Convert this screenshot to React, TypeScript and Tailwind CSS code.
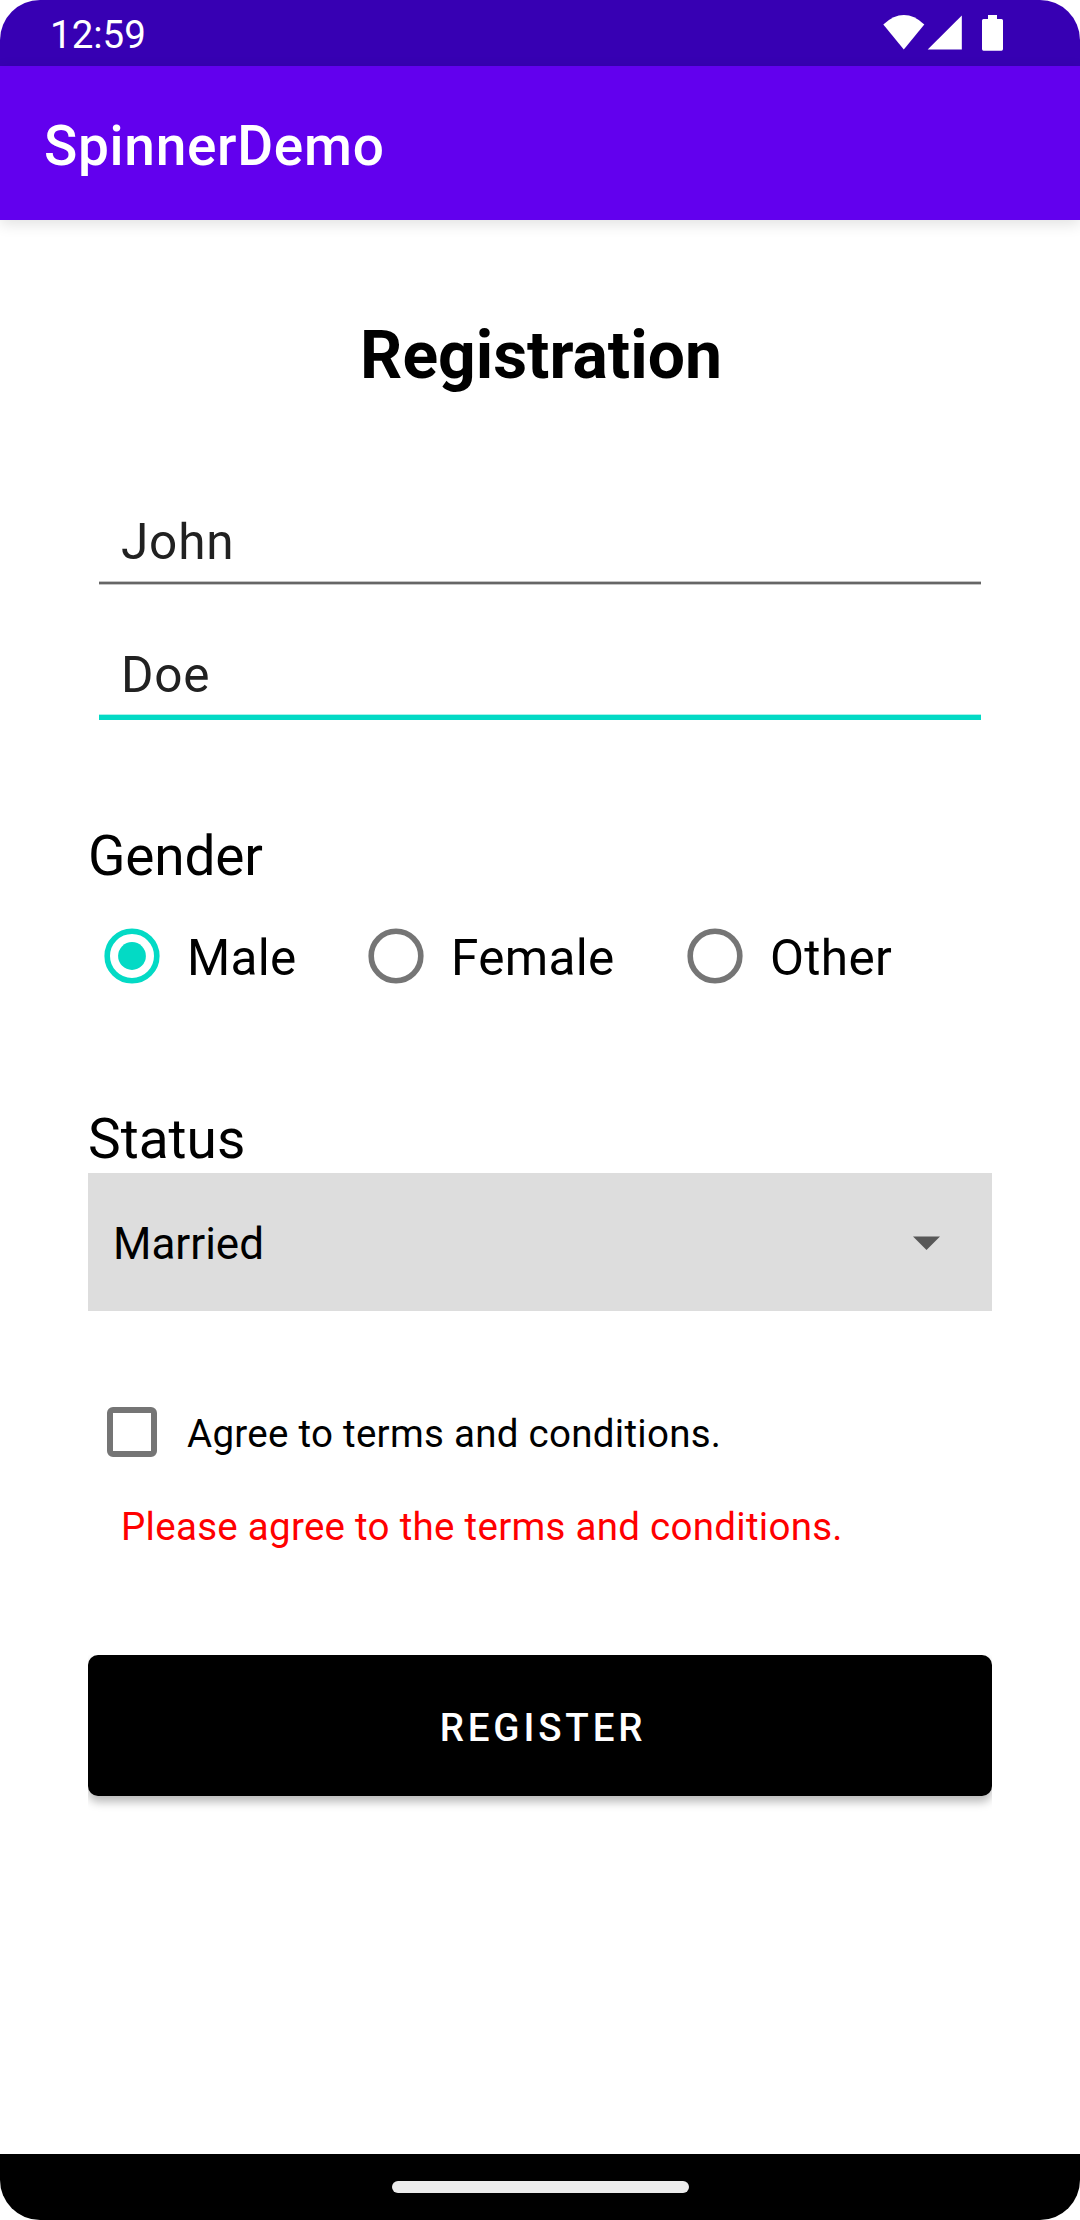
function StatusBar() {
  return (
    <div className="flex h-[66px] items-start justify-between bg-[#3700b3] pl-[50px] pr-[77px] text-white">
      <span className="mt-[12px] text-[38.5px] leading-[46px]">12:59</span>
      <div className="mt-[13px] flex items-start">
        <svg className="h-[40px] w-[44px]" viewBox="0 0 44 40" fill="currentColor">
          <path d="M1.300 11.400 Q22 -7.400 42.300 11.400 L21.800 36.400 Z" />
        </svg>
        <svg className="h-[40px] w-[36px]" viewBox="0 0 36 40" fill="currentColor">
          <path d="M1.700 36.500 L35.800 2.500 V36.500 Z" />
        </svg>
        <svg className="ml-[20px] h-[40px] w-[21px]" viewBox="0 0 21 40" fill="currentColor">
          <path d="M6 2 H15 V6 H19.500 Q21 6 21 7.500 V36 Q21 37.700 19.500 37.700 H1.500 Q0 37.700 0 36 V7.500 Q0 6 1.500 6 H6 Z" />
        </svg>
      </div>
    </div>
  );
}

function Radio({ label, checked = false }: { label: string; checked?: boolean }) {
  return (
    <label className="flex h-[58px] items-center">
      <svg
        className={checked ? "size-[56px] text-[#03dac5]" : "size-[56px] text-[#757575]"}
        viewBox="0 0 56 56"
      >
        <circle cx="28" cy="28" r="24.8" fill="none" stroke="currentColor" strokeWidth="5.600" />
        {checked && <circle cx="28" cy="28" r="13.9" fill="currentColor" />}
      </svg>
      <span className="ml-[27px] mt-[4px] text-[49.5px] leading-[58px] tracking-[0.3px]">{label}</span>
    </label>
  );
}

export default function App() {
  return (
    <div className="h-[2220px] w-[1080px] bg-white">
      <div className="flex h-full flex-col overflow-hidden rounded-[40px] bg-white font-['Roboto',sans-serif] text-black">
        <StatusBar />
        <header className="flex h-[154px] shrink-0 items-center bg-[#6200ee] px-[44px] shadow-[0_4px_14px_rgba(0,0,0,0.12)]">
          <h1 className="mt-[6px] text-[55px] font-medium leading-[64px] tracking-[0.7px] text-white">SpinnerDemo</h1>
        </header>

        <main className="flex flex-1 flex-col px-[88px]">
          <h2 className="mt-[97px] pl-[2px] text-center text-[66px] font-bold leading-[78px]">Registration</h2>

          <div className="mx-[11px] mt-[118px] flex h-[72px] flex-col justify-between text-[#212121]">
            <span className="pl-[22px] text-[49.5px] leading-[58px] tracking-[0.8px]">John</span>
            <span className="h-[4px] border-y border-[#c4c4c4] bg-[#666666]" />
          </div>
          <div className="mx-[11px] mt-[61px] flex h-[74px] flex-col justify-between text-[#212121]">
            <span className="pl-[22px] text-[49.5px] leading-[58px] tracking-[0.8px]">Doe</span>
            <span className="h-[6px] border-t border-[#a8f1ea] bg-[#03dac5]" />
          </div>

          <h3 className="mt-[104px] text-[55px] leading-[64px] tracking-[-0.2px]">Gender</h3>
          <div className="mt-[39px] flex pl-[16px]">
            <div className="w-[264px]"><Radio label="Male" checked /></div>
            <div className="w-[319px]"><Radio label="Female" /></div>
            <Radio label="Other" />
          </div>

          <h3 className="mt-[122px] text-[55px] leading-[64px]">Status</h3>
          <div className="mt-[2px] flex h-[138px] items-center justify-between bg-[#dddddd] pl-[25px] pr-[52px]">
            <span className="mt-[4px] text-[44px] leading-[52px]">Married</span>
            <svg className="mt-[2px] h-[14px] w-[27px]" viewBox="0 0 27 14" fill="#575757">
              <path d="M0 .5 H27 L13.500 14 Z" />
            </svg>
          </div>

          <label className="mt-[96px] flex h-[50px] items-start pl-[19px]">
            <span className="size-[50px] rounded-[6px] border-[6px] border-[#757575]" />
            <span className="ml-[30px] mt-[4px] text-[38.5px] leading-[46px] tracking-[0.28px]">Agree to terms and conditions.</span>
          </label>
          <p className="mt-[47px] pl-[33px] text-[38.5px] leading-[46px] tracking-[0.28px] text-[#ff0000]">
            Please agree to the terms and conditions.
          </p>

          <div className="mt-[105px] overflow-hidden pb-[18px]">
            <button className="flex h-[141px] w-full items-center justify-center rounded-[10px] bg-black pl-[6px] pt-[5px] text-[38.5px] font-medium leading-[46px] tracking-[3.85px] text-white shadow-[0_6px_10px_rgba(0,0,0,0.28)]">
              REGISTER
            </button>
          </div>
        </main>

        <nav className="flex h-[66px] shrink-0 items-center justify-center bg-black">
          <span className="h-[12px] w-[297px] rounded-full bg-[#ececec]" />
        </nav>
      </div>
    </div>
  );
}
